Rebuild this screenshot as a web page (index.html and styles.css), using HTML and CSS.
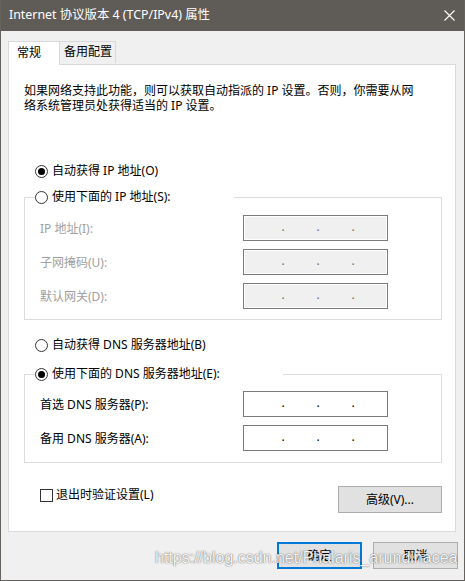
FILE: index.html
```html
<!DOCTYPE html>
<html lang="zh-CN">
<head>
<meta charset="utf-8">
<title>Internet 协议版本 4 (TCP/IPv4) 属性</title>
<link rel="stylesheet" href="styles.css">
</head>
<body>
<div class="window">
  <div class="titlebar">
    <span class="title">Internet 协议版本 4 (TCP/IPv4) 属性</span>
    <svg class="close" width="11" height="11" viewBox="0 0 11 11"><path d="M0.5 0.5 L10.5 10.5 M10.5 0.5 L0.5 10.5" stroke="#ffffff" stroke-width="1.1" fill="none"/></svg>
  </div>
  <div class="content">
    <div class="tabs">
      <div class="tab active">常规</div>
      <div class="tab">备用配置</div>
    </div>
    <div class="panel">
      <p class="desc">如果网络支持此功能，则可以获取自动指派的 IP 设置。否则，你需要从网<br>络系统管理员处获得适当的 IP 设置。</p>

      <div class="radio first"><span class="circle checked"></span><span>自动获得 IP 地址(O)</span></div>
      <fieldset class="group ip">
        <legend><span class="radio"><span class="circle"></span><span>使用下面的 IP 地址(S):</span></span></legend>
        <div class="field disabled"><span class="label">IP 地址(I):</span><div class="ipbox"><i>.</i><i>.</i><i>.</i></div></div>
        <div class="field disabled"><span class="label">子网掩码(U):</span><div class="ipbox"><i>.</i><i>.</i><i>.</i></div></div>
        <div class="field disabled"><span class="label">默认网关(D):</span><div class="ipbox"><i>.</i><i>.</i><i>.</i></div></div>
      </fieldset>

      <div class="radio second"><span class="circle"></span><span>自动获得 DNS 服务器地址(B)</span></div>
      <fieldset class="group dns">
        <legend><span class="radio"><span class="circle checked"></span><span>使用下面的 DNS 服务器地址(E):</span></span></legend>
        <div class="field"><span class="label">首选 DNS 服务器(P):</span><div class="ipbox"><i>.</i><i>.</i><i>.</i></div></div>
        <div class="field"><span class="label">备用 DNS 服务器(A):</span><div class="ipbox"><i>.</i><i>.</i><i>.</i></div></div>
      </fieldset>

      <div class="bottom-row">
        <div class="check"><span class="box"></span><span>退出时验证设置(L)</span></div>
        <button class="btn advanced">高级(V)...</button>
      </div>
    </div>
    <div class="actions">
      <button class="btn primary">确定</button>
      <button class="btn">取消</button>
    </div>
  </div>
  <div class="watermark">https://blog.csdn.net/Phalaris_arundinacea</div>
</div>
</body>
</html>
```

FILE: styles.css
```css
* { box-sizing: border-box; }
html, body { margin: 0; padding: 0; }
body {
  font-family: "Noto Sans", "Noto Sans CJK SC", sans-serif;
  font-size: 12px;
  color: #000;
  background: #f0f0f0;
}
.window {
  position: relative;
  width: 465px;
  height: 581px;
  background: #f0f0f0;
  border: 1px solid #66625e;
  border-top: 0;
  display: flex;
  flex-direction: column;
  overflow: hidden;
}
.titlebar {
  height: 31px;
  margin: 0 -1px;
  background: #5f5b57;
  color: #fff;
  display: flex;
  align-items: center;
  justify-content: space-between;
  padding: 0 10px 1px 9px;
  flex: none;
}
.title { font-size: 12.4px; line-height: 16px; }
.close { display: block; }

.content {
  padding: 10px 8px 0 7px;
  display: flex;
  flex-direction: column;
}
.tabs {
  display: flex;
  align-items: flex-end;
  height: 23px;
  position: relative;
  z-index: 1;
}
.tab {
  border: 1px solid #d9d9d9;
  border-bottom: 0;
  background: #f0f0f0;
  height: 22px;
  padding: 0 0 0 4px;
  line-height: 20px;
  width: 57px;
  margin-left: -1px;
  margin-bottom: 1px;
}
.tab.active {
  background: #fff;
  height: 24px;
  width: 52px;
  margin-left: 0;
  margin-bottom: -1px;
  padding-left: 8px;
  line-height: 22px;
}
.panel {
  background: #fff;
  border: 1px solid #d9d9d9;
  padding: 18px 13px 18px 15px;
  display: flex;
  flex-direction: column;
}
.desc {
  margin: 0;
  line-height: 15px;
}
.radio {
  display: flex;
  align-items: center;
  height: 16px;
  line-height: 16px;
  gap: 4px;
  white-space: nowrap;
}
.radio.first { margin-top: 50px; margin-left: 11px; }
.radio.second { margin-top: 17px; margin-left: 11px; }
.circle {
  width: 13px;
  height: 13px;
  border: 1px solid #333;
  border-radius: 50%;
  background: #fff;
  position: relative;
  flex: none;
}
.circle.checked::after {
  content: "";
  position: absolute;
  left: 2px;
  top: 2px;
  width: 7px;
  height: 7px;
  border-radius: 50%;
  background: #000;
}
.group {
  margin: 0;
  min-width: 0;
  border: 1px solid #dcdcdc;
  padding: 0 0 10px 15px;
}
.group.ip { margin-top: 10px; padding-top: 10px; padding-bottom: 10px; }
.group.dns { margin-top: 13px; padding-top: 9px; padding-bottom: 11px; }
.group legend {
  padding: 0 63px 0 0;
  margin-left: -5px;
}
.field {
  display: grid;
  grid-template-columns: 203px 145px;
  align-items: center;
  height: 26px;
}
.field + .field { margin-top: 8px; }
.field.disabled .label { color: #a0a0a0; }
.ipbox {
  height: 26px;
  border: 1px solid #7a7a7a;
  background: #fff;
  display: flex;
  padding-left: 37px;
  line-height: 22px;
}
.field.disabled .ipbox {
  background: #f0f0f0;
  box-shadow: inset 0 0 0 1px #fff;
  color: #6d6d6d;
}
.ipbox i {
  font-style: normal;
  width: 4px;
  text-align: center;
  margin-right: 31px;
}
.bottom-row {
  margin-top: 23px;
  display: flex;
  justify-content: space-between;
  align-items: flex-start;
}
.check {
  display: flex;
  align-items: center;
  gap: 3px;
  height: 16px;
  line-height: 16px;
  margin-top: 1px;
  margin-left: 16px;
}
.box {
  width: 13px;
  height: 13px;
  border: 1px solid #333;
  background: #fff;
}
.btn {
  font-family: inherit;
  font-size: 12px;
  color: #000;
  background: #e1e1e1;
  border: 1px solid #adadad;
  padding: 0;
  height: 27px;
  width: 85px;
  line-height: 24px;
}
.btn.advanced { width: 104px; }
.btn.primary { border: 2px solid #0078d7; }
.actions {
  margin-top: 10px;
  display: flex;
  justify-content: flex-end;
  gap: 11px;
  margin-right: -2px;
}
.watermark {
  position: absolute;
  left: 154px;
  top: 549px;
  font-family: "Liberation Sans", Arial, sans-serif;
  font-size: 16px;
  color: rgba(255, 255, 255, 0.95);
  text-shadow: 0 0 1px rgba(0, 0, 0, 0.55), 0 0 2px rgba(0, 0, 0, 0.3);
  white-space: nowrap;
  pointer-events: none;
}
```
